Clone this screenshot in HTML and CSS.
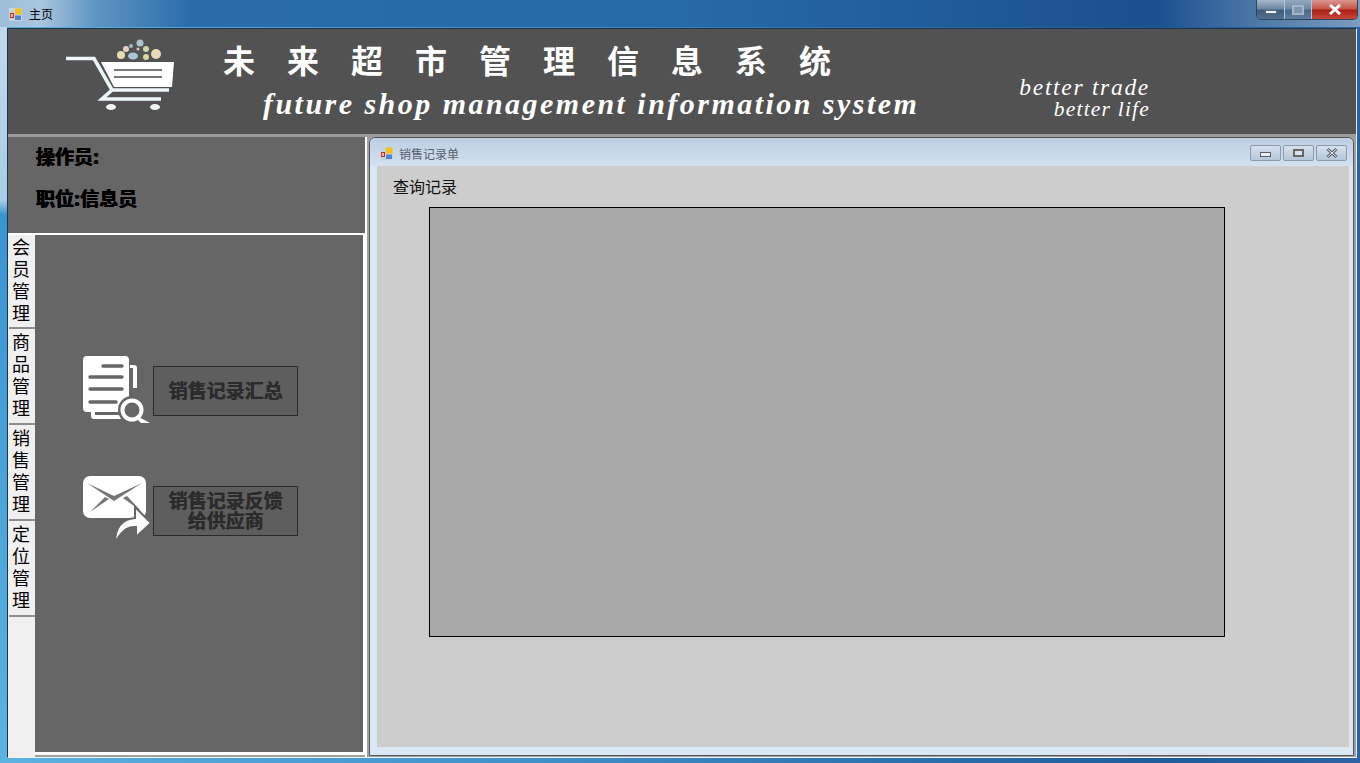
FILE: index.html
```html
<!DOCTYPE html>
<html lang="zh-CN">
<head>
    <meta charset="UTF-8">
    <title>主页</title>
    <link rel="stylesheet" href="styles.css">
</head>
<body>
    <div class="window">
        <div class="titlebar">
            <svg class="app-icon" viewBox="0 0 13 13"><rect width="13" height="13" rx="1" fill="#c9d3dc"/><rect x="1" y="5" width="4" height="5" fill="#c4281c"/><rect x="1.8" y="6" width="2.2" height="3" fill="#e8b8a8"/><rect x="6" y="0.5" width="6.5" height="6" fill="#f2c21a"/><rect x="6" y="7.5" width="6" height="4.5" fill="#4f82cf"/></svg>
            <span class="title-text">主页</span>
            <div class="win-btns">
                <div class="win-btn min"><span class="bar"></span></div>
                <div class="win-btn max"><span class="box"></span></div>
                <div class="win-btn close">
                    <svg width="14" height="11" viewBox="0 0 14 11"><path d="M2 1 L12 10 M12 1 L2 10" stroke="#fff" stroke-width="3"/></svg>
                </div>
            </div>
        </div>
        <div class="frame">
            <div class="banner">
                <svg class="logo" viewBox="60 36 120 76">
                    <circle cx="141" cy="43" r="3.5" fill="#a9c3cf"/>
                    <circle cx="132" cy="46" r="2" fill="#9fb9c4"/>
                    <circle cx="127" cy="49" r="3" fill="#e4cfc9"/>
                    <circle cx="139" cy="49" r="1.5" fill="#d9c6b5"/>
                    <circle cx="147" cy="49" r="3" fill="#cfd4a9"/>
                    <circle cx="122" cy="55" r="4" fill="#e6dcae"/>
                    <ellipse cx="134" cy="56" rx="5" ry="3.5" fill="#a9c6d8"/>
                    <circle cx="147" cy="57" r="3" fill="#d9d8a2"/>
                    <circle cx="157" cy="54" r="5" fill="#ecd9b9"/>
                    <path d="M102 62 H175 L173 87 H115 Z" fill="#fff"/>
                    <path d="M115 70 H163 M115 77 H163" stroke="#4c4c4c" stroke-width="1.6"/>
                    <path d="M67 58.5 H95 L113 90 H170 M113 90 L103 99 H162" fill="none" stroke="#eef6fa" stroke-width="3.6"/>
                    <ellipse cx="112" cy="107" rx="5" ry="3" fill="#f2f7f8"/>
                    <ellipse cx="156" cy="107" rx="5" ry="3" fill="#f2f7f8"/>
                </svg>
                <div class="banner-title">
                    <div class="title-cn">未来超市管理信息系统</div>
                    <div class="title-en">future shop management information system</div>
                </div>
                <div class="slogan">
                    <div class="slogan-a">better trade</div>
                    <div class="slogan-b">better life</div>
                </div>
            </div>
            <div class="main">
                <div class="left">
                    <div class="info">
                        <div>操作员:</div>
                        <div>职位:信息员</div>
                    </div>
                    <div class="tab-area">
                        <div class="tabs">
                            <div class="tab">会员管理</div>
                            <div class="tab">商品管理</div>
                            <div class="tab">销售管理</div>
                            <div class="tab">定位管理</div>
                        </div>
                        <div class="tab-panel">
                            <div class="action">
                                <svg class="action-icon" viewBox="0 0 68 68">
                                    <rect x="0" y="0" width="46" height="56" rx="4" fill="#fff"/>
                                    <path d="M47 9 H51 Q54 9 54 12 V32 H50 V12 H47 Z" fill="#fff"/>
                                    <path d="M8 54 H12 V59 H38 V63 H11 Q8 63 8 60 Z" fill="#fff"/>
                                    <path d="M20 10 H39 M7 21 H39 M7 33 H39 M7 46 H33" stroke="#666" stroke-width="3.4" stroke-linecap="round"/>
                                    <circle cx="49" cy="54" r="14" fill="#666"/>
                                    <circle cx="49" cy="54" r="9.5" fill="#666" stroke="#fff" stroke-width="4"/>
                                    <path d="M56 61 L67 67 H58 L54 63 Z" fill="#fff"/>
                                </svg>
                                <div class="action-btn">销售记录汇总</div>
                            </div>
                            <div class="action">
                                <svg class="action-icon" viewBox="0 0 68 68">
                                    <rect x="0" y="0" width="63" height="42" rx="7" fill="#fff"/>
                                    <path d="M4 7 L31 20 L59 7 L31 25 Z M7 36 L22 21 L26 23 Z M40 22 L44 20 L58 35 Z" fill="#777"/>
                                    <path d="M32 67 C32 51 40 43 52 42 V31 L68 47 L53 61 V51 C44 50 37 57 32 67 Z" fill="#fff" stroke="#666" stroke-width="2"/>
                                </svg>
                                <div class="action-btn">销售记录反馈<br>给供应商</div>
                            </div>
                        </div>
                    </div>
                </div>
                <div class="mdi">
                    <div class="child">
                        <div class="child-title">
                            <svg class="child-icon" viewBox="0 0 13 13"><rect width="13" height="13" rx="1" fill="#c9d3dc"/><rect x="1" y="5" width="4" height="5" fill="#c4281c"/><rect x="1.8" y="6" width="2.2" height="3" fill="#e8b8a8"/><rect x="6" y="0.5" width="6.5" height="6" fill="#f2c21a"/><rect x="6" y="7.5" width="6" height="4.5" fill="#4f82cf"/></svg>
                            <span>销售记录单</span>
                            <div class="child-btns">
                                <div class="child-btn"><span class="c-min"></span></div>
                                <div class="child-btn"><span class="c-max"></span></div>
                                <div class="child-btn">
                                    <svg width="12" height="10" viewBox="0 0 12 10"><path d="M1.5 1 L10.5 9 M10.5 1 L1.5 9" stroke="#56606c" stroke-width="3"/><path d="M1.5 1 L10.5 9 M10.5 1 L1.5 9" stroke="#f2f5f8" stroke-width="1"/></svg>
                                </div>
                            </div>
                        </div>
                        <div class="client">
                            <div class="query-label">查询记录</div>
                            <div class="grid-box"></div>
                        </div>
                    </div>
                </div>
            </div>
        </div>
    </div>
</body>
</html>
```

FILE: styles.css
```css
* {
    box-sizing: border-box;
}
html, body {
    margin: 0;
    height: 100%;
    overflow: hidden;
}
body {
    font-family: "Noto Sans CJK SC", "Liberation Sans", sans-serif;
}
.window {
    width: 1360px;
    height: 763px;
    display: flex;
    flex-direction: column;
    background:
        linear-gradient(#c5dcec 0, #a8cde6 200px, #3a94d0 215px, #5cb2e0 100%) left top / 7px 100% no-repeat,
        linear-gradient(90deg, #5cb2e0 0%, #3f8fc8 40%, #1f5c9e 85%, #2b62a4 100%);
}
.titlebar {
    height: 27px;
    display: flex;
    align-items: flex-start;
    background: linear-gradient(90deg, #9dbdd8 0%, #a9c6de 3%, #5f95c2 7%, #2a6cab 14%, #276aa8 50%, #1b4f8f 85%, #4a76a6 92%, #7d9dc0 100%);
}
.app-icon {
    width: 13px;
    height: 13px;
    margin: 8px 0 0 9px;
}
.title-text {
    margin: 5px 0 0 7px;
    font-size: 12px;
    line-height: 17px;
    color: #000;
}
.win-btns {
    margin-left: auto;
    margin-right: 2px;
    width: 102px;
    height: 20px;
    display: flex;
    border: 1px solid #2e4258;
    border-top: none;
    border-radius: 0 0 5px 5px;
    overflow: hidden;
}
.win-btn {
    display: flex;
    align-items: center;
    justify-content: center;
    border-right: 1px solid #b4c5d6;
}
.win-btn.min {
    width: 28px;
    background: linear-gradient(#a7b8c9, #6f88a3 45%, #3f5d7d 55%, #51708f);
}
.win-btn.max {
    width: 27px;
    background: linear-gradient(#92a8be, #6f8aa6 45%, #4a6a8c 55%, #5c7ea2);
}
.win-btn.close {
    flex: 1;
    border-right: none;
    background: linear-gradient(#d8978e, #c8564a 45%, #ae1f14 55%, #c54a3c);
}
.bar {
    width: 12px;
    height: 4px;
    margin-top: 5px;
    background: #eef2f6;
    border: 1px solid #5a6b7d;
}
.box {
    width: 12px;
    height: 10px;
    border: 2px solid #a4b6c8;
    background: #7d97b2;
}
.frame {
    width: 1350px;
    height: 730px;
    margin: 1px 0 0 7px;
    display: flex;
    flex-direction: column;
    background: #a0a0a0;
    border: 1px solid #1f3347;
    border-right-color: #e8eef5;
    border-bottom-color: #f0f4f8;
}
.banner {
    height: 108px;
    flex-shrink: 0;
    display: flex;
    background: #525252;
    border-bottom: 3px solid #9c9c9c;
}
.logo {
    width: 120px;
    height: 76px;
    margin: 7px 0 0 51px;
}
.banner-title {
    width: 770px;
    margin-left: 44px;
    color: #fff;
}
.title-cn {
    margin-top: 7px;
    font-size: 32px;
    line-height: 46px;
    letter-spacing: 32px;
    font-weight: 700;
    white-space: nowrap;
}
.title-en {
    margin: 4px 0 0 40px;
    font-family: "Liberation Serif", serif;
    font-style: italic;
    font-weight: 700;
    font-size: 30px;
    line-height: 36px;
    letter-spacing: 2.47px;
    white-space: nowrap;
}
.slogan {
    width: 131px;
    margin: 47px 0 0 26px;
    color: #fff;
    font-family: "Liberation Serif", serif;
    font-style: italic;
    text-align: right;
}
.slogan-a {
    font-size: 23.5px;
    line-height: 22px;
    letter-spacing: 1.7px;
    white-space: nowrap;
}
.slogan-b {
    font-size: 21.5px;
    line-height: 22px;
    letter-spacing: 1.2px;
    white-space: nowrap;
}
.main {
    flex: 1;
    display: flex;
    min-height: 0;
}
.left {
    width: 359px;
    display: flex;
    flex-direction: column;
    border-right: 2px solid #fff;
}
.info {
    height: 98px;
    padding: 6px 0 0 28px;
    background: #666;
    border-bottom: 2px solid #fff;
    color: #000;
    font-size: 19px;
    font-weight: 700;
    line-height: 26px;
    text-shadow: 0.5px 0 0 #000, -0.5px 0 0 #000;
}
.info div + div {
    margin-top: 16px;
}
.tab-area {
    flex: 1;
    display: flex;
    min-height: 0;
}
.tabs {
    width: 27px;
    padding-left: 1px;
    background: #f0f0f0;
}
.tab {
    height: 96px;
    padding: 1px 3px 0 3px;
    width: 100%;
    font-size: 18px;
    font-weight: 400;
    line-height: 22px;
    word-break: break-all;
    color: #000;
    border-bottom: 2px solid #8c8c8c;
}
.tab:first-child {
    height: 94px;
    padding-top: 0;
}
.tab-panel {
    flex: 1;
    padding: 121px 0 0 48px;
    background: #666;
    border-right: 2px solid #fff;
    border-bottom: 3px solid #fff;
    margin-bottom: 2px;
    display: flex;
    flex-direction: column;
    gap: 52px;
}
.action {
    display: flex;
    align-items: center;
    gap: 2px;
    height: 68px;
}
.action-icon {
    width: 68px;
    height: 68px;
    overflow: visible;
}
.action-btn {
    width: 145px;
    height: 50px;
    margin-top: 2px;
    padding-bottom: 2px;
    display: flex;
    align-items: center;
    justify-content: center;
    text-align: center;
    background: #5e5e5e;
    border: 1px solid #2a2a2a;
    color: #2b2b2b;
    font-size: 19px;
    font-weight: 700;
    line-height: 20px;
    text-shadow: 0.5px 0 0 #2b2b2b;
}
.mdi {
    flex: 1;
    padding: 0 2px 0 2px;
    background: #a0a0a0;
}
.child {
    height: 619px;
    display: flex;
    flex-direction: column;
    padding: 0 4px 8px 7px;
    background: #dbe7f5;
    border: 1px solid #555;
    border-radius: 6px 6px 0 0;
}
.child-title {
    height: 28px;
    flex-shrink: 0;
    margin: 0 -4px 0 -7px;
    padding: 2px 6px 0 10px;
    display: flex;
    align-items: center;
    gap: 6px;
    background: linear-gradient(#bccfe2, #d3e1f0);
    border-radius: 6px 6px 0 0;
    font-size: 12px;
    color: #56606c;
}
.child-icon {
    width: 13px;
    height: 13px;
}
.child-btns {
    margin-left: auto;
    display: flex;
    gap: 2px;
}
.child-btn {
    width: 31px;
    height: 16px;
    display: flex;
    align-items: center;
    justify-content: center;
    background: linear-gradient(#d5e1ee, #b5c7da);
    border: 1px solid #8a9bb0;
    border-radius: 2px;
}
.c-min {
    width: 11px;
    height: 5px;
    margin-top: 3px;
    background: #eef2f6;
    border: 1px solid #56606c;
}
.c-max {
    width: 11px;
    height: 8px;
    border: 2px solid #666;
    background: #dce6f0;
}
.client {
    flex: 1;
    padding: 10px 0 0 16px;
    background: #cdcdcd;
}
.query-label {
    font-size: 16px;
    line-height: 20px;
    color: #111;
}
.grid-box {
    width: 796px;
    height: 430px;
    margin: 11px 0 0 36px;
    background: #a9a9a9;
    border: 1px solid #000;
}
```
